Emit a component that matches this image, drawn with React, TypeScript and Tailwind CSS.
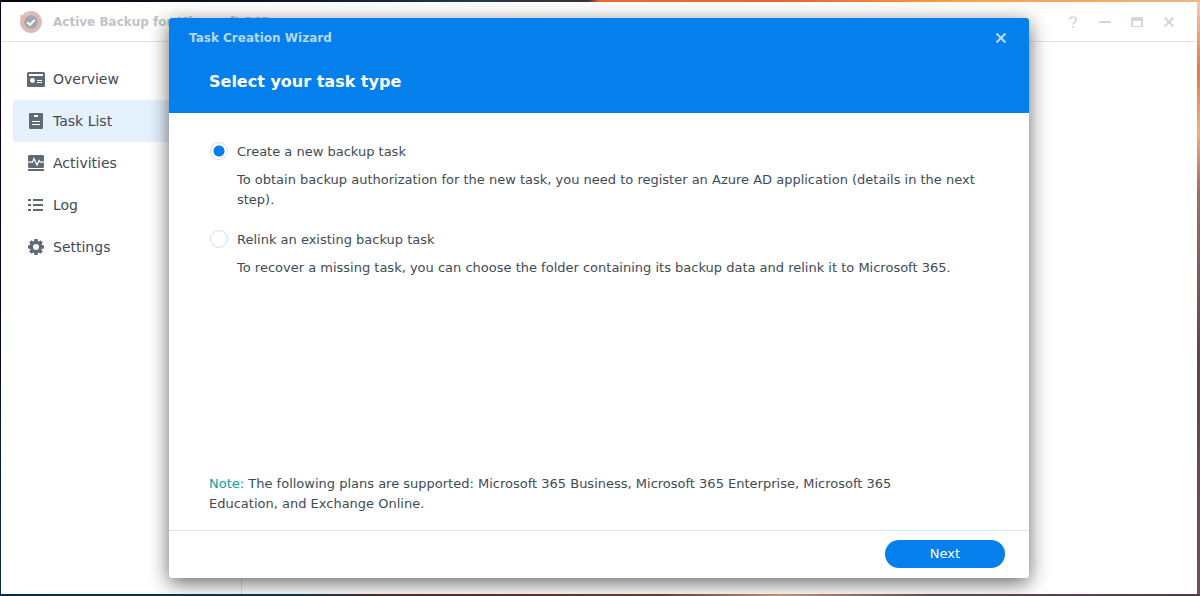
import { useState } from 'react';
import type { ReactNode } from 'react';

type NavItem = { label: string; icon: ReactNode };

const navItems: NavItem[] = [
  {
    label: 'Overview',
    icon: (
      <>
        <rect y="2" width="18" height="15" rx="1.5" fill="currentColor" />
        <path d="M2 4h14v2H2zM10 10h5v1h-5zM10 12h5v1h-5z" fill="#fff" />
        <circle cx="5.5" cy="10.5" r="2.4" fill="#fff" />
      </>
    ),
  },
  {
    label: 'Task List',
    icon: (
      <>
        <rect x="2" y="1" width="14" height="16" rx="1.2" fill="currentColor" />
        <path d="M7 3h4v2H7zM5 9h8v1H5zM5 12h8v1H5z" fill="#fff" />
      </>
    ),
  },
  {
    label: 'Activities',
    icon: (
      <>
        <rect x="1" y="1" width="16" height="13" rx="1.5" fill="currentColor" />
        <path d="M1 8.2h4.500L7 4.500l3 6.500 2-4.500 1.200 1.700H17" fill="none" stroke="#fff" strokeWidth="1.2" />
        <path d="M1 15h16v2H1z" fill="currentColor" />
      </>
    ),
  },
  {
    label: 'Log',
    icon: (
      <path
        d="M1 3h3v2H1zM1 8h3v2H1zM1 13h3v2H1zM6 3h10v2H6zM6 8h10v2H6zM6 13h10v2H6z"
        fill="currentColor"
      />
    ),
  },
  {
    label: 'Settings',
    icon: (
      <>
        <circle cx="9" cy="9" r="4.600" fill="none" stroke="currentColor" strokeWidth="3.200" />
        <g fill="currentColor">
          {[0, 45, 90, 135, 180, 225, 270, 315].map((angle) => (
            <path key={angle} d="M7.400 1h3.200l.4 2.500H7z" transform={`rotate(${angle} 9 9)`} />
          ))}
        </g>
      </>
    ),
  },
];

const options = [
  {
    id: 'create',
    label: 'Create a new backup task',
    text: 'To obtain backup authorization for the new task, you need to register an Azure AD application (details in the next step).',
  },
  {
    id: 'relink',
    label: 'Relink an existing backup task',
    text: 'To recover a missing task, you can choose the folder containing its backup data and relink it to Microsoft 365.',
  },
];

const windowControls: NavItem[] = [
  {
    label: 'Help',
    icon: (
      <path d="M2.700 3.800C2.700 2 4 1 6 1s3.300 1.100 3.300 2.800C9.300 6 6 6 6 8.800M6 10.200v1.800" fill="none" stroke="currentColor" strokeWidth="1.700" />
    ),
  },
  { label: 'Minimize', icon: <path d="M0 5h12v2H0z" fill="currentColor" /> },
  {
    label: 'Maximize',
    icon: <path fillRule="evenodd" d="M1 1h10a1 1 0 0 1 1 1v9H0V2a1 1 0 0 1 1-1zM2 5v5h8V5z" fill="currentColor" />,
  },
  {
    label: 'Close',
    icon: <path d="M1.500 1.500l9 9M10.500 1.500l-9 9" stroke="currentColor" strokeWidth="2.200" />,
  },
];

function Logo() {
  return (
    <svg viewBox="0 0 22 22" className="size-[22px] shrink-0" aria-hidden="true">
      <circle cx="11" cy="11" r="11" fill="#c3c7cf" />
      <path d="M3.300 7A8.800 8.800 0 1 0 11 2.300" fill="none" stroke="#f2b1a3" strokeWidth="1.800" />
      <path d="M5 4.500A8.800 8.800 0 0 1 11 2.300" fill="none" stroke="#ecc0b7" strokeWidth="1.800" />
      <path d="M0.500 3v6h6.500z" fill="#f4b3a2" />
      <circle cx="11" cy="11" r="6.800" fill="#a2a6af" />
      <path d="M7.300 11.200l2.700 2.600 4.700-4.900" fill="none" stroke="#fff" strokeWidth="2" />
    </svg>
  );
}

function Wizard() {
  const [choice, setChoice] = useState('create');

  return (
    <section
      role="dialog"
      aria-labelledby="wizard-title"
      className="flex h-full w-full max-w-[860px] flex-col overflow-hidden rounded-[3px] bg-white shadow-[0_5px_20px_rgba(0,0,0,0.6)]"
    >
      <header className="bg-[#057feb] px-5 pb-5">
        <div className="flex h-10 items-center justify-between">
          <h1 id="wizard-title" className="text-xs font-bold text-[#b4d8f9]">
            Task Creation Wizard
          </h1>
          <button type="button" aria-label="Close wizard" className="flex h-6 w-4 items-center justify-center text-[#b4d8f9]">
            <svg viewBox="0 0 12 12" className="size-3" aria-hidden="true">
              <path d="M1.500 1.500l9 9M10.500 1.500l-9 9" stroke="currentColor" strokeWidth="2.200" />
            </svg>
          </button>
        </div>
        <h2 className="px-5 pt-3 text-base leading-[23px] font-bold text-white">Select your task type</h2>
      </header>

      <div className="flex flex-1 flex-col justify-between px-10 pt-[29px] pb-4 leading-5">
        <fieldset aria-label="Task type" className="flex flex-col gap-5">
          {options.map((option) => (
            <div key={option.id} className="grid grid-cols-[28px_1fr] gap-y-2">
              <input
                id={option.id}
                type="radio"
                name="task-type"
                checked={choice === option.id}
                onChange={() => setChoice(option.id)}
                className="ml-px size-[18px] appearance-none rounded-full border border-[#d5e0ea] bg-white checked:bg-[radial-gradient(circle,#057feb_5px,#fff_6px)]"
              />
              <label htmlFor={option.id}>{option.label}</label>
              <p className="col-start-2">{option.text}</p>
            </div>
          ))}
        </fieldset>
        <p className="pr-14">
          <span className="text-[#05a6a1]">Note:</span> The following plans are supported: Microsoft 365 Business, Microsoft
          365 Enterprise, Microsoft 365 Education, and Exchange Online.
        </p>
      </div>

      <footer className="flex justify-end border-t border-[#dbe5ee] px-6 pt-[9px] pb-[10px]">
        <button type="button" className="h-7 w-[120px] rounded-full bg-[#057feb] text-white">
          Next
        </button>
      </footer>
    </section>
  );
}

export default function App() {
  return (
    <div className="h-screen bg-[linear-gradient(to_right,#05030f,#0b1929_25%,#26394a_40%,#3a3038_49%,#ef6a30_50%,#e8642c_65%,#f7a04a_80%,#f2a860_90%,#f0b488),linear-gradient(to_right,#0a2c45,#123648_25%,#4e2b26_32%,#6b3a2c_55%,#c08f72_65%,#5f4950_78%,#4b3e46),linear-gradient(#03041f,#05061f_50%,#0d2f48),linear-gradient(#f3cdb5,#e5764a_12%,#f0b080_22%,#a07068_32%,#5a474d_60%,#6b5356)] bg-[size:100%_2px,100%_2px,1px_100%,3px_100%] bg-[position:top,bottom,left,right] bg-no-repeat pt-[2px] pr-[3px] pb-[2px] pl-px font-['DejaVu_Sans',Verdana,sans-serif] text-[13px] text-[#414b55]">
      <div className="relative flex h-full flex-col overflow-hidden rounded-[3px] bg-white">
        <header className="flex h-10 shrink-0 items-center gap-[11px] border-b border-[#dfe5eb] pr-3 pl-[19px]">
          <Logo />
          <span className="flex-1 text-xs font-bold text-[#c0c3c7]">Active Backup for Microsoft 365</span>
          <div className="flex text-[#d3d6da]">
            {windowControls.map((control) => (
              <button key={control.label} type="button" aria-label={control.label} className="flex h-8 w-8 items-center justify-center">
                <svg viewBox="0 0 12 12" className="size-3" aria-hidden="true">
                  {control.icon}
                </svg>
              </button>
            ))}
          </div>
        </header>

        <div className="flex flex-1">
          <nav className="w-[241px] border-r border-[#dfe5eb] px-3 py-4 text-sm">
            {navItems.map((item) => (
              <a
                key={item.label}
                href="#"
                aria-current={item.label === 'Task List' ? 'page' : undefined}
                className="flex h-[42px] items-center gap-2 rounded-[4px] pl-[14px] aria-[current=page]:bg-[#e5f1fd]"
              >
                <svg viewBox="0 0 18 18" className="size-[18px] text-[#5f6a76]" aria-hidden="true">
                  {item.icon}
                </svg>
                {item.label}
              </a>
            ))}
          </nav>
          <main className="flex-1" />
        </div>

        <div className="absolute inset-0 flex items-center justify-center p-4">
          <Wizard />
        </div>
      </div>
    </div>
  );
}
